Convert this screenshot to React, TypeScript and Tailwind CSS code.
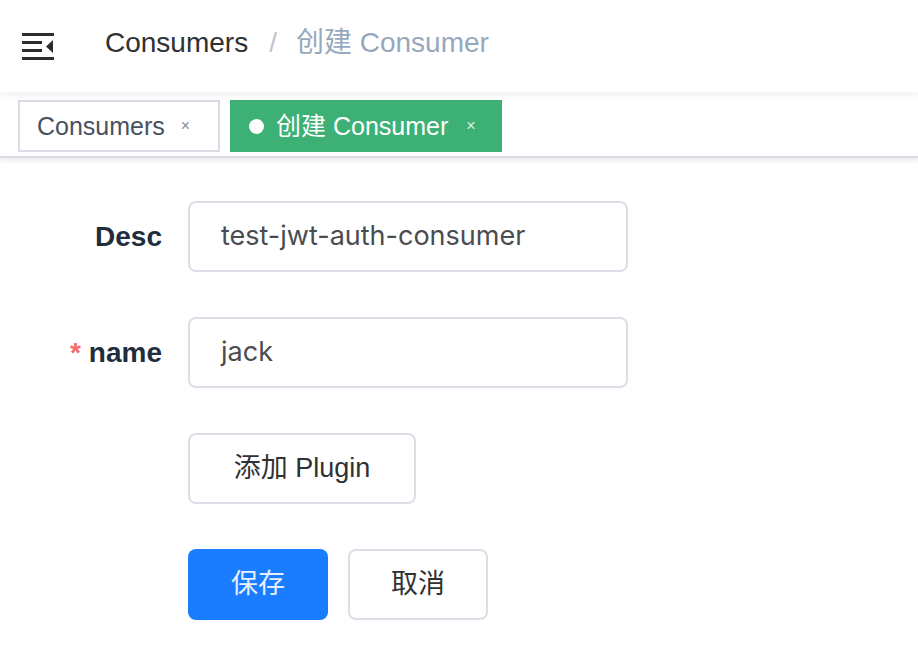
import React from "react";

const font = '"Liberation Sans", "Noto Sans CJK SC", sans-serif';
const inputFont = 'Inter, "Noto Sans CJK SC", sans-serif';

function Hamburger() {
  return (
    <svg width="34" height="30" viewBox="0 0 34 30" className="block">
      <rect x="0" y="1" width="32" height="3" fill="#2b2b2b" />
      <rect x="0" y="9" width="20" height="3" fill="#2b2b2b" />
      <rect x="0" y="17" width="20" height="3" fill="#2b2b2b" />
      <rect x="0" y="25" width="32" height="3" fill="#2b2b2b" />
      <polygon points="24,14.5 31,8 31,21" fill="#2b2b2b" />
    </svg>
  );
}

export default function App() {
  return (
    <div className="w-[918px] h-[650px] bg-white overflow-hidden" style={{ fontFamily: font }}>
      {/* Navbar */}
      <div className="relative z-20 h-[92px] flex items-center bg-white shadow-[0_2px_8px_rgba(0,21,41,0.08)]">
        <div className="pl-[22px] pt-[2px]">
          <Hamburger />
        </div>
        <div className="ml-[49px] flex items-center text-[28px] leading-none pb-[6px]">
          <span className="text-[#303133]">Consumers</span>
          <span className="ml-[21px] mr-[19px] text-[#c0c4cc]">/</span>
          <span className="text-[#97a8be]">创建 Consumer</span>
        </div>
      </div>

      {/* Tags view */}
      <div className="relative z-10 h-[66px] bg-white border-b-2 border-[#d8dce5] shadow-[0_2px_6px_rgba(0,0,0,0.10)] flex items-start pt-[8px] pl-[18px] gap-[10px]">
        <div className="h-[52px] w-[202px] border-2 border-[#d8dce5] bg-white flex items-center pl-[17px] text-[25px] text-[#495060] leading-none">
          <span>Consumers</span>
          <span className="ml-[16px] text-[16px] text-[#8a8f99]">×</span>
        </div>
        <div className="h-[52px] w-[272px] border-2 border-[#3cb075] bg-[#3cb075] flex items-center pl-[17px] text-[25px] text-white leading-none">
          <span className="w-[15px] h-[15px] rounded-full bg-white mr-[12px]" />
          <span>创建 Consumer</span>
          <span className="ml-[18px] text-[16px] text-white/80">×</span>
        </div>
      </div>

      {/* Form */}
      <div className="pt-[43px] flex flex-col gap-[45px]">
        <div className="flex items-center">
          <div className="w-[162px] text-right text-[28px] font-bold text-[#1f2d3d]">Desc</div>
          <div
            className="ml-[26px] w-[440px] h-[71px] border-2 border-[#dcdfe6] rounded-[8px] flex items-center pl-[31px] text-[27px] text-[#4a4c52]"
            style={{ fontFamily: inputFont }}
          >
            test-jwt-auth-consumer
          </div>
        </div>
        <div className="flex items-center">
          <div className="w-[162px] text-right text-[28px] font-bold text-[#1f2d3d]">
            <span className="text-[#f56c6c] mr-[8px]">*</span>name
          </div>
          <div
            className="ml-[26px] w-[440px] h-[71px] border-2 border-[#dcdfe6] rounded-[8px] flex items-center pl-[31px] text-[27px] text-[#4a4c52]"
            style={{ fontFamily: inputFont }}
          >
            jack
          </div>
        </div>
        <div className="flex items-center">
          <div className="ml-[188px] w-[228px] h-[71px] border-2 border-[#dcdfe6] rounded-[8px] flex items-center justify-center text-[27px] text-[#303133]">
            添加 Plugin
          </div>
        </div>
        <div className="flex items-center gap-[20px]">
          <div className="ml-[188px] w-[140px] h-[71px] bg-[#1a7cff] rounded-[8px] flex items-center justify-center text-[27px] text-[#e6efff]">
            保存
          </div>
          <div className="w-[140px] h-[71px] border-2 border-[#dcdfe6] rounded-[8px] flex items-center justify-center text-[27px] text-[#303133]">
            取消
          </div>
        </div>
      </div>
    </div>
  );
}
